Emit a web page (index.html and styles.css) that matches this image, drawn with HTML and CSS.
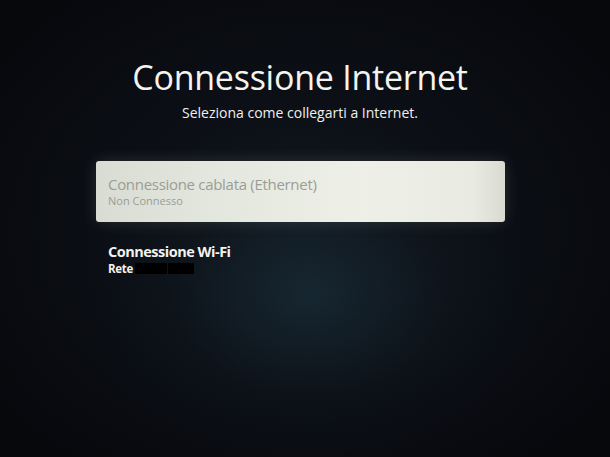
FILE: index.html
```html
<!DOCTYPE html>
<html lang="it">
<head>
<meta charset="utf-8">
<title>Connessione Internet</title>
<link rel="stylesheet" href="styles.css">
</head>
<body>
<main class="screen">
  <header class="head">
    <h1 class="title">Connessione Internet</h1>
    <p class="subtitle">Seleziona come collegarti a Internet.</p>
  </header>
  <ul class="options">
    <li class="option option--focused">
      <span class="option-name">Connessione cablata (Ethernet)</span>
      <span class="option-status">Non Connesso</span>
    </li>
    <li class="option option--wifi">
      <span class="option-name">Connessione Wi-Fi</span>
      <span class="option-status">Rete <span class="redact redact--a"></span><span class="redact redact--b"></span></span>
    </li>
  </ul>
</main>
</body>
</html>
```

FILE: styles.css
```css
html, body {
  margin: 0;
  padding: 0;
  height: 100%;
}
body {
  background: #0a0c10;
  font-family: "Open Sans", "Noto Sans", sans-serif;
  color: #f2f2ee;
  overflow: hidden;
}
.screen {
  height: 457px;
  display: flex;
  flex-direction: column;
  background:
    radial-gradient(ellipse 230px 170px at 310px 295px, rgba(30, 58, 70, 0.5), rgba(20, 36, 46, 0.18) 60%, rgba(0, 0, 0, 0) 100%),
    radial-gradient(ellipse 380px 300px at 300px 230px, #10151d 0%, #0b0e14 55%, #07080c 100%);
}
.head {
  display: flex;
  flex-direction: column;
  align-items: center;
  padding: 56px 10px 0 0;
}
.title {
  margin: 0;
  font-size: 34px;
  line-height: 42px;
  font-weight: 400;
  letter-spacing: -0.25px;
  color: #f4f4ef;
}
.subtitle {
  margin: 6px 0 0;
  font-size: 14px;
  line-height: 18px;
  color: #f0f0ec;
}
.options {
  list-style: none;
  margin: 39px 0 0;
  padding: 0 105px 0 96px;
  display: flex;
  flex-direction: column;
}
.option {
  display: flex;
  flex-direction: column;
  padding: 0 12px;
}
.option--focused {
  height: 61px;
  box-sizing: border-box;
  padding-top: 13.5px;
  border-radius: 3px;
  background: linear-gradient(90deg, #d9dcd2 0%, #e4e7dd 30%, #eef0e8 65%, #e9ebe3 92%, #d9dbd3 100%);
  box-shadow: 0 0 16px rgba(200, 210, 200, 0.16);
  color: #9a9d97;
}
.option--focused .option-name {
  letter-spacing: -0.3px;
}
.option--wifi {
  margin-top: 19.5px;
  font-weight: 700;
}
.option--wifi .option-name {
  font-size: 14.5px;
  letter-spacing: -0.5px;
}
.option-name {
  font-size: 15px;
  line-height: 19px;
}
.option-status {
  font-size: 11px;
  line-height: 14px;
  display: flex;
  align-items: center;
}
.option--wifi .option-status {
  font-size: 11.5px;
  line-height: 15px;
  letter-spacing: -0.3px;
}
.redact {
  display: inline-block;
  height: 11px;
  background: #000;
}
.redact--a {
  width: 32px;
  margin-left: 2px;
}
.redact--b {
  width: 26px;
  margin-left: 1px;
}
```
